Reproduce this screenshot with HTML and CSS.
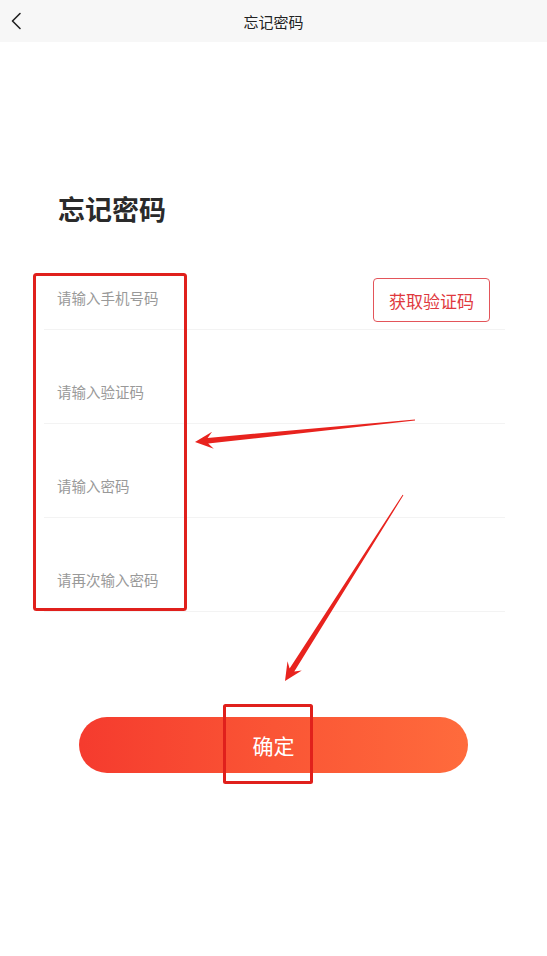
FILE: index.html
```html
<!DOCTYPE html>
<html lang="zh-CN">
<head>
<meta charset="utf-8">
<title>忘记密码</title>
<link rel="stylesheet" href="styles.css">
</head>
<body>
<div class="page">
  <header class="topbar">
    <button class="back" aria-label="返回">
      <svg width="12" height="18" viewBox="0 0 12 18"><path d="M10 1.5 L2.5 9 L10 16.5" fill="none" stroke="#222" stroke-width="1.6" stroke-linecap="round" stroke-linejoin="round"/></svg>
    </button>
    <div class="topbar-title">忘记密码</div>
    <span class="topbar-side"></span>
  </header>

  <main class="content">
    <h1 class="heading">忘记密码</h1>
    <form class="form">
      <div class="row">
        <input class="field" type="tel" placeholder="请输入手机号码">
        <button type="button" class="code-btn">获取验证码</button>
      </div>
      <div class="row">
        <input class="field" type="text" placeholder="请输入验证码">
      </div>
      <div class="row">
        <input class="field" type="password" placeholder="请输入密码">
      </div>
      <div class="row">
        <input class="field" type="password" placeholder="请再次输入密码">
      </div>
      <button type="button" class="submit">确定</button>
    </form>
  </main>

  <svg class="annotations" width="547" height="956" viewBox="0 0 547 956" aria-hidden="true">
    <rect x="34.5" y="274.5" width="151" height="335" rx="2" fill="none" stroke="#e0201c" stroke-width="3"/>
    <rect x="224.5" y="705.5" width="87" height="77" rx="1" fill="none" stroke="#e0201c" stroke-width="3"/>
    <polygon fill="#e8231e" points="195,442 213.8,448.7 208.2,443.5 415.05,420.5 414.95,419.5 207.6,437.9 212.1,431.7"/>
    <polygon fill="#e8231e" points="285,681 301.8,670.4 294.3,671.5 403.4,495.3 402.6,494.7 289.6,668.5 287.5,661.2"/>
  </svg>
</div>
</body>
</html>
```

FILE: styles.css
```css
* { box-sizing: border-box; }
html, body { margin: 0; padding: 0; background: #fff; }
body {
  font-family: "Noto Sans CJK SC", "Noto Sans", sans-serif;
  color: #222;
}
.page {
  position: relative;
  width: 547px;
  min-height: 956px;
}
.topbar {
  height: 42px;
  background: #f7f7f7;
  display: grid;
  grid-template-columns: 42px 1fr 42px;
  align-items: center;
}
.back {
  border: 0;
  background: none;
  padding: 0 0 0 10px;
  height: 42px;
  display: flex;
  align-items: center;
}
.topbar-title {
  text-align: center;
  font-size: 15px;
  color: #222;
}
.content {
  padding: 0 42px 0 44px;
}
.heading {
  margin: 148px 0 0;
  padding-left: 14px;
  font-size: 27px;
  line-height: 37px;
  font-weight: 700;
  color: #2a2a2a;
}
.form {
  margin-top: 9px;
  display: flex;
  flex-direction: column;
}
.row {
  height: 94px;
  padding: 30px 15px 0 0;
  border-bottom: 1px solid #f3f3f3;
  display: flex;
  align-items: flex-start;
}
.field {
  flex: 1;
  min-width: 0;
  height: 62px;
  border: 0;
  outline: none;
  padding: 0 0 0 13px;
  font-family: inherit;
  font-size: 14.5px;
  color: #333;
  background: transparent;
}
.field::placeholder { color: #999; }
.code-btn {
  margin-top: 12px;
  width: 117px;
  height: 44px;
  border: 1px solid #e3555a;
  border-radius: 4px;
  background: #fff;
  color: #e0393e;
  font-family: inherit;
  font-size: 17px;
  padding: 0;
}
.submit {
  margin: 105px 0 0 35px;
  width: 389px;
  height: 56px;
  border: 0;
  border-radius: 28px;
  background: linear-gradient(90deg, #f53b2e 0%, #fa5535 50%, #ff6b3c 100%);
  color: #fff;
  font-family: inherit;
  font-size: 21px;
  padding: 0;
}
.annotations {
  position: absolute;
  left: 0;
  top: 0;
  pointer-events: none;
}
```
